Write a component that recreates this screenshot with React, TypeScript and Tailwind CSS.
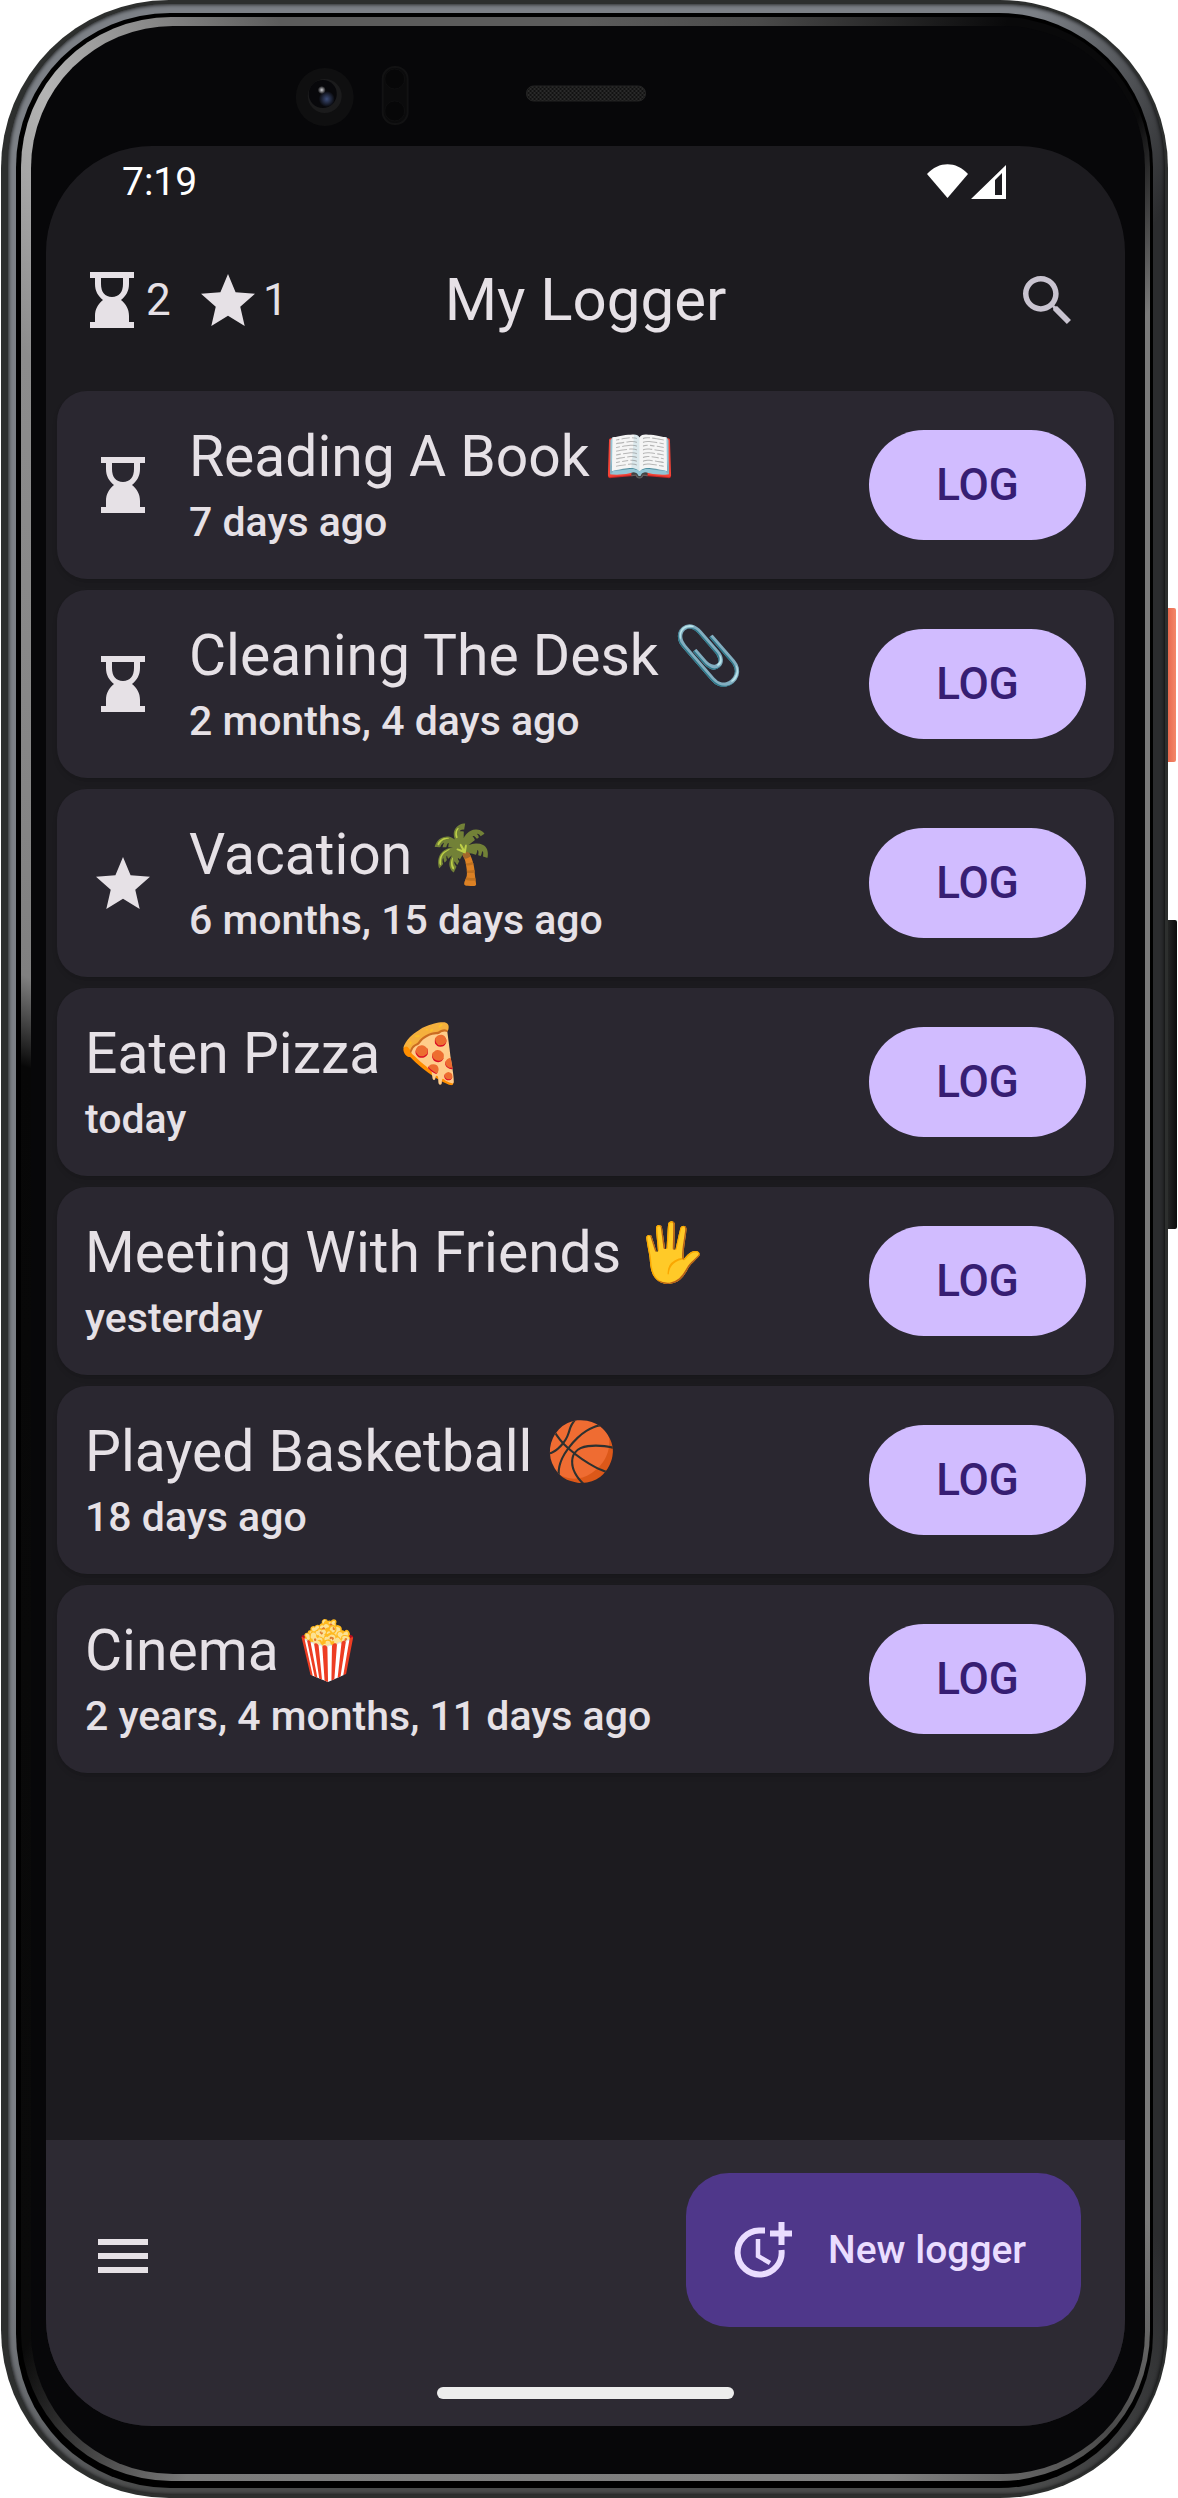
import React from "react";

type IconName = "hourglass" | "star";

type Entry = { title: string; emoji: string; ago: string; icon?: IconName };

const entries: Entry[] = [
  { title: "Reading A Book", emoji: "📖", ago: "7 days ago", icon: "hourglass" },
  { title: "Cleaning The Desk", emoji: "📎", ago: "2 months, 4 days ago", icon: "hourglass" },
  { title: "Vacation", emoji: "🌴", ago: "6 months, 15 days ago", icon: "star" },
  { title: "Eaten Pizza", emoji: "🍕", ago: "today" },
  { title: "Meeting With Friends", emoji: "🖐️", ago: "yesterday" },
  { title: "Played Basketball", emoji: "🏀", ago: "18 days ago" },
  { title: "Cinema", emoji: "🍿", ago: "2 years, 4 months, 11 days ago" },
];

function Hourglass() {
  return (
    <svg className="h-14 w-11 shrink-0" viewBox="0 0 44 56" fill="currentColor" aria-hidden="true">
      <path d="M0 0H44V6H39V12C39 19 36 24 31 28C36 32 39 37 39 44V50H44V56H0V50H5V44C5 37 8 32 13 28C8 24 5 19 5 12V6H0ZM11 6V12C11 20 15 25 22 25S33 20 33 12V6Z" fillRule="evenodd" />
    </svg>
  );
}

function Star() {
  return (
    <svg className="h-[52px] w-[54px] shrink-0" viewBox="2 2 20 19" preserveAspectRatio="none" fill="currentColor" aria-hidden="true">
      <path d="M12 17.27 18.18 21l-1.64-7.03L22 9.24l-7.19-.61L12 2 9.19 8.63 2 9.24l5.46 4.73L5.82 21z" />
    </svg>
  );
}

function Frame({ children }: { children: React.ReactNode }) {
  return (
    <div className="relative mr-[10px] ml-px flex min-h-screen flex-col rounded-[168px] bg-[#2d2f2e] pt-1 pr-[3px] pb-[3px] pl-[7px]">
      <div className="absolute top-[608px] -right-2 h-[154px] w-2 rounded-r-xs bg-linear-to-r from-[#e8694e] to-[#f48769]" />
      <div className="absolute top-[920px] -right-[9px] h-[309px] w-[9px] rounded-r-xs bg-linear-to-r from-[#242525] to-[#0c0c0c]" />
      <div className="flex flex-1 flex-col rounded-[162px] bg-[conic-gradient(#7c8086_0deg,#7c8086_20deg,#2b2c2e_29deg,#2b2c2e_150deg,#4a4b4b_160deg,#4a4b4b_200deg,#7c8086_210deg,#7c8086_360deg)] pt-[9px] pr-3 pb-[7px] pl-2 shadow-[inset_0_0_4px_#000]">
        <div className="flex flex-1 flex-col rounded-[154px] bg-black pt-1 pr-[3px] pb-[7px] pl-[5px]">
          <div className="flex flex-1 flex-col rounded-[150px] bg-[conic-gradient(#5c5c5c_0deg,#4a4a4a_8deg,#09090a_19deg,#09090a_26deg,#7a7a7a_31deg,#7a7a7a_150deg,#4a4a4a_156deg,#808080_166deg,#7a7a7a_198deg,#0a0a0a_207deg,#070707_288deg,#808080_296deg,#8c8c8c_328deg,#b4b4b4_335deg,#5c5c5c_346deg)] pt-[9px] pr-[5px] pb-[7px] pl-[10px]">
            <div className="flex flex-1 flex-col rounded-[142px] bg-[#070709] pr-5 pb-12 pl-[15px]">{children}</div>
          </div>
        </div>
      </div>
    </div>
  );
}

function Sensors() {
  return (
    <svg className="block h-[120px] w-full" viewBox="46 26 1080 120" aria-hidden="true">
      <defs>
        <pattern id="mesh" width="4" height="4" patternUnits="userSpaceOnUse">
          <rect width="4" height="4" fill="#2a2a2a" />
          <circle cx="1" cy="1" r="1" fill="#0a0a0a" />
          <circle cx="3" cy="3" r="1" fill="#0a0a0a" />
        </pattern>
        <radialGradient id="pupil">
          <stop offset="0" stopColor="#3d4d78" />
          <stop offset="1" stopColor="#3d4d78" stopOpacity="0" />
        </radialGradient>
        <radialGradient id="glint">
          <stop offset="0" stopColor="#d0d0d4" />
          <stop offset="1" stopColor="#d0d0d4" stopOpacity="0" />
        </radialGradient>
      </defs>
      <circle cx="325" cy="97" r="29" fill="#0f0f10" />
      <circle cx="325" cy="96" r="17" fill="#1b1b1c" />
      <circle cx="323" cy="94" r="14" fill="#08080b" />
      <circle cx="327" cy="99" r="8" fill="url(#pupil)" />
      <circle cx="322" cy="90" r="4" fill="url(#glint)" />
      <rect x="383" y="67" width="25" height="57" rx="12" fill="#0b0b0c" stroke="#121213" strokeWidth="2" />
      <circle cx="395" cy="79" r="10" fill="#070708" stroke="#0f0f10" />
      <circle cx="395" cy="111" r="10" fill="#070708" stroke="#0f0f10" />
      <rect x="527" y="86" width="119" height="15" rx="7" fill="url(#mesh)" stroke="#242424" />
    </svg>
  );
}

function Card({ entry }: { entry: Entry }) {
  return (
    <li className="flex h-[188px] items-center rounded-[30px] bg-[#2a2730] px-7 shadow-md">
      {entry.icon && (
        <span className="mr-7 flex w-[76px] justify-center">{entry.icon === "star" ? <Star /> : <Hourglass />}</span>
      )}
      <div className="min-w-0 flex-1">
        <h2 className="text-[57px] leading-[74px]">
          {entry.title} {entry.emoji}
        </h2>
        <p className="text-[41px] leading-[56px] font-medium">{entry.ago}</p>
      </div>
      <button className="h-[110px] w-[217px] rounded-full bg-[#d1bcff] text-[44px] font-medium text-[#371e73]">LOG</button>
    </li>
  );
}

export default function App() {
  return (
    <div className="bg-white font-['Roboto','Noto_Color_Emoji',sans-serif] text-[#e6e1e6]">
      <Frame>
        <Sensors />
        <div className="flex flex-1 flex-col overflow-hidden rounded-[106px] bg-[#1c1b1f]">
          <div className="flex h-[72px] items-center justify-between pr-[118px] pl-[76px] text-[39px] text-white">
            <span>7:19</span>
            <svg className="h-9 w-20" viewBox="929 163 80 36" fill="currentColor" aria-hidden="true">
              <path d="M929 173C941 160 958 160 970 173L949.500 197Z" />
              <path fillRule="evenodd" d="M1008 164V198H973ZM997 179V194H1004V172Z" />
            </svg>
          </div>
          <header className="grid h-[164px] grid-cols-[1fr_auto_1fr] items-center px-11">
            <div className="flex items-center text-[44px]">
              <Hourglass />
              <span className="ml-3 w-[55px]">2</span>
              <Star />
              <span className="ml-2">1</span>
            </div>
            <h1 className="text-[60px]">My Logger</h1>
            <button aria-label="Search" className="mr-[10px] justify-self-end text-[#c9c4d0]">
              <svg className="size-12" viewBox="3 3 17.500 17.500" fill="currentColor" aria-hidden="true">
                <path d="M15.500 14h-.79l-.28-.27C15.410 12.590 16 11.110 16 9.500 16 5.910 13.090 3 9.500 3S3 5.910 3 9.500 5.910 16 9.500 16c1.610 0 3.090-.59 4.230-1.570l.27.28v.79l5 4.990L20.490 19l-4.990-5zm-6 0C7.010 14 5 11.990 5 9.500S7.010 5 9.500 5 14 7.010 14 9.500 11.990 14 9.500 14z" />
              </svg>
            </button>
          </header>
          <main className="flex-1 px-[11px] pt-[9px]">
            <ul className="flex flex-col gap-[11px]">
              {entries.map((e) => (
                <Card key={e.title} entry={e} />
              ))}
            </ul>
          </main>
          <footer className="flex h-[286px] flex-col bg-[#2d2a33] pt-[33px]">
            <div className="flex items-center justify-between pr-11 pl-[52px]">
              <button aria-label="Menu" className="pt-3">
                <svg className="h-[34px] w-[50px]" viewBox="0 0 50 34" fill="currentColor" aria-hidden="true">
                  <path d="M0 0H50V6H0ZM0 14H50V20H0ZM0 28H50V34H0Z" />
                </svg>
              </button>
              <button className="flex h-[154px] w-[395px] items-center gap-9 rounded-[43px] bg-[#4f378a] pl-12 text-[39px] font-medium text-[#eaddff]">
                <svg className="h-14 w-[58px]" viewBox="736 2222 58 56" fill="none" stroke="currentColor" aria-hidden="true">
                  <path d="M767 2230.500H761A22 22 0 1 0 783.500 2250" strokeWidth="6" />
                  <path d="M760 2239V2256L772 2263" strokeWidth="4.500" />
                  <path d="M783.500 2222V2245M772 2233.500H794" strokeWidth="6" />
                </svg>
                New logger
              </button>
            </div>
            <div className="mx-auto mt-[60px] h-3 w-[297px] rounded-full bg-[#ededed]" />
          </footer>
        </div>
      </Frame>
    </div>
  );
}
